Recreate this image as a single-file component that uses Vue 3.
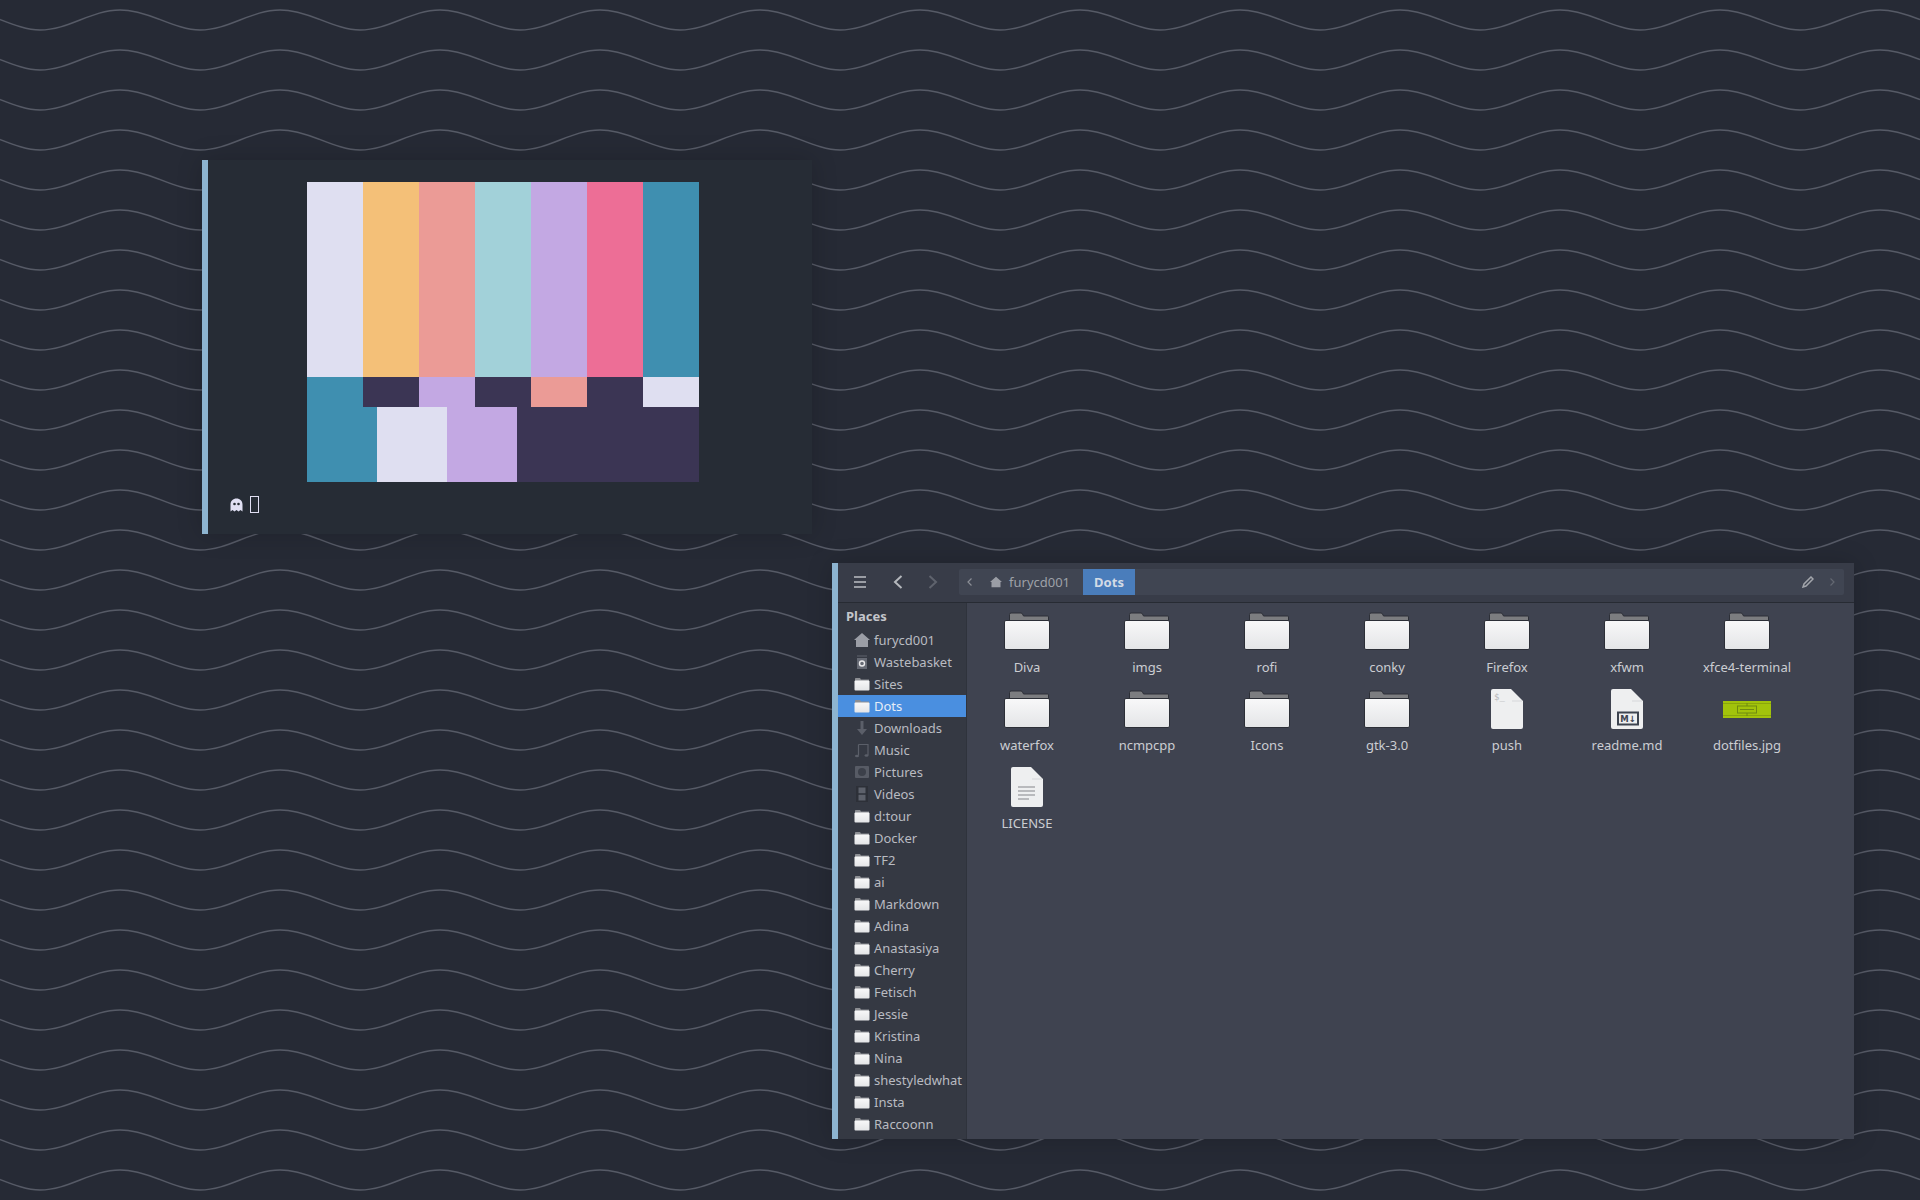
<script setup>
const topBars = ['#dfdff1', '#f4c078', '#eb9b96', '#a2d1d9', '#c3a8e3', '#ed6e96', '#3f8fb0']
const midBars = ['#3f8fb0', '#3b3554', '#c3a8e3', '#3b3554', '#eb9b96', '#3b3554', '#dfdff1']
const lowBars = [
  { color: '#3f8fb0', width: 70 },
  { color: '#dfdff1', width: 70 },
  { color: '#c3a8e3', width: 70 },
  { color: '#3b3554', width: 182 }
]

const places = [
  { name: 'furycd001', icon: 'home' },
  { name: 'Wastebasket', icon: 'trash' },
  { name: 'Sites', icon: 'mini-folder' },
  { name: 'Dots', icon: 'mini-folder', active: true },
  { name: 'Downloads', icon: 'down' },
  { name: 'Music', icon: 'music' },
  { name: 'Pictures', icon: 'camera' },
  { name: 'Videos', icon: 'film' },
  ...['d:tour', 'Docker', 'TF2', 'ai', 'Markdown', 'Adina', 'Anastasiya', 'Cherry', 'Fetisch',
    'Jessie', 'Kristina', 'Nina', 'shestyledwhat', 'Insta', 'Raccoonn'].map((name) => ({ name, icon: 'mini-folder' }))
]

const files = [
  ...['Diva', 'imgs', 'rofi', 'conky', 'Firefox', 'xfwm', 'xfce4-terminal',
    'waterfox', 'ncmpcpp', 'Icons', 'gtk-3.0'].map((name) => ({ name, type: 'folder' })),
  { name: 'push', type: 'script' },
  { name: 'readme.md', type: 'markdown' },
  { name: 'dotfiles.jpg', type: 'image' },
  { name: 'LICENSE', type: 'text' }
]
</script>

<template>
  <div class="desktop">
    <svg class="wallpaper" width="1920" height="1200">
      <defs>
        <pattern id="waves" width="160" height="40" patternUnits="userSpaceOnUse">
          <path d="M0 19.5C13 24.5 27 30 40 30C69 30 91 10 120 10C133 10 147 14.5 160 19.5" fill="none" stroke="#565a66" stroke-width="1.5" />
        </pattern>
        <linearGradient id="paper" x1="0" y1="0" x2="0" y2="1">
          <stop offset="0" stop-color="#f8f8f9" />
          <stop offset="1" stop-color="#e4e5e7" />
        </linearGradient>
        <symbol id="folder" viewBox="0 0 48 48">
          <path d="M6.500 12V8.500Q6.500 7 8 7H18Q19.500 7 20 9L20.500 10H44.500Q45.500 10 45.500 11V15H6.500Z" fill="#7c7d80" stroke="#2c2f37" stroke-width="1" />
          <rect x="1.500" y="14.500" width="45" height="29" rx="1.500" fill="url(#paper)" stroke="#2c2f37" stroke-width="1" />
        </symbol>
        <symbol id="page" viewBox="0 0 32 40">
          <path d="M2 0H20L32 12V38Q32 40 30 40H2Q0 40 0 38V2Q0 0 2 0Z" fill="#eeeff0" />
          <path d="M21 12H31" stroke="#d6d7da" stroke-width="1" />
        </symbol>
        <symbol id="mini-folder" viewBox="0 0 16 16">
          <path d="M1 4V2.800Q1 2 1.800 2H6L7 3.500H15V6H1Z" fill="#8c8e93" />
          <rect x="0.500" y="4.500" width="15" height="10" rx="1" fill="url(#paper)" />
        </symbol>
        <symbol id="home" viewBox="0 0 16 16">
          <path d="M8 1L16 8H14V15H2V8H0Z" fill="#9b9ea6" />
        </symbol>
        <symbol id="trash" viewBox="0 0 16 16">
          <path d="M3 1H13V3H3Z" fill="#4a4e58" />
          <path d="M3 4H13V15H3Z" fill="#666a74" />
          <circle cx="8" cy="9.500" r="2.500" fill="none" stroke="#e8e8ea" stroke-width="1.400" />
        </symbol>
        <symbol id="down" viewBox="0 0 16 16">
          <path d="M6.500 1H9.500V9H13L8 15L3 9H6.500Z" fill="#5b5f69" />
        </symbol>
        <symbol id="music" viewBox="0 0 16 16">
          <path d="M4.500 2.500H14V13M4.500 2.500V13.500" fill="none" stroke="#5b5f69" stroke-width="1.200" />
          <ellipse cx="3" cy="14" rx="2" ry="1.300" fill="#5b5f69" />
          <ellipse cx="12.500" cy="13.500" rx="2" ry="1.300" fill="#5b5f69" />
        </symbol>
        <symbol id="camera" viewBox="0 0 16 16">
          <path d="M1 3Q1 2 2 2H14Q15 2 15 3V13Q15 14 14 14H2Q1 14 1 13Z" fill="#575b65" />
          <circle cx="8" cy="8" r="4" fill="#3c404a" />
        </symbol>
        <symbol id="film" viewBox="0 0 16 16">
          <path d="M2 0H14V16H2Z" fill="#2d3038" />
          <path d="M4.500 1.500H11.500V7.300H4.500ZM4.500 8.700H11.500V14.500H4.500Z" fill="#5d616b" />
        </symbol>
      </defs>
      <rect width="1920" height="1200" fill="url(#waves)" />
    </svg>

    <section class="window bars-window">
      <div class="bars">
        <div class="bar-row tall">
          <span v-for="(color, i) in topBars" :key="i" class="bar" :style="{ background: color }"></span>
        </div>
        <div class="bar-row mid">
          <span v-for="(color, i) in midBars" :key="i" class="bar" :style="{ background: color }"></span>
        </div>
        <div class="bar-row low">
          <span v-for="bar in lowBars" :key="bar.width + bar.color" :style="{ background: bar.color, width: bar.width + 'px' }"></span>
        </div>
      </div>
      <div class="prompt">
        <svg class="ghost" width="13" height="14" viewBox="0 0 13 14">
          <path d="M0.500 13.500V6.500C0.500 3 3 0.500 6.500 0.500C10 0.500 12.500 3 12.500 6.500V13.500L10.500 12L8.500 13.500L6.500 12L4.500 13.500L2.500 12Z" fill="#e0dff3" />
          <circle cx="4.500" cy="6" r="1.300" fill="#262c35" />
          <circle cx="8.500" cy="6" r="1.300" fill="#262c35" />
        </svg>
        <span class="cursor"></span>
      </div>
    </section>

    <section class="window files-window">
      <header class="toolbar">
        <svg class="menu-icon" width="12" height="12" viewBox="0 0 12 12">
          <path d="M0 1H12M0 6H12M0 11H12" stroke="#9a9da4" stroke-width="2" />
        </svg>
        <svg class="nav back" width="10" height="14" viewBox="0 0 10 14">
          <path d="M8.500 1L2 7L8.500 13" fill="none" stroke="#b5b8bd" stroke-width="2" />
        </svg>
        <svg class="nav forward" width="10" height="14" viewBox="0 0 10 14">
          <path d="M1.500 1L8 7L1.500 13" fill="none" stroke="#5f636d" stroke-width="2" />
        </svg>
        <div class="pathbar">
          <svg class="crumb-arrow" width="6" height="8" viewBox="0 0 6 8">
            <path d="M4.500 0.500L1 4L4.500 7.500" fill="none" stroke="#8b8e96" stroke-width="1.200" />
          </svg>
          <svg class="crumb-home" width="12" height="12"><use href="#home" /></svg>
          <span class="crumb">furycd001</span>
          <span class="crumb-active">Dots</span>
          <svg class="pencil" width="12" height="12" viewBox="0 0 12 12">
            <path d="M9 1L11 3L4 10L1 11L2 8Z" fill="none" stroke="#a2a5ab" stroke-width="1.500" />
          </svg>
          <svg class="crumb-next" width="6" height="8" viewBox="0 0 6 8">
            <path d="M1.500 0.500L5 4L1.500 7.500" fill="none" stroke="#646872" stroke-width="1.200" />
          </svg>
        </div>
      </header>
      <div class="body">
        <aside class="sidebar">
          <h3 class="places-title">Places</h3>
          <div v-for="place in places" :key="place.name" class="place" :class="{ active: place.active }">
            <svg class="place-icon" width="16" height="16"><use :href="'#' + place.icon" /></svg>
            <span>{{ place.name }}</span>
          </div>
        </aside>
        <main class="grid">
          <div v-for="file in files" :key="file.name" class="file">
            <div class="file-icon">
              <svg v-if="file.type === 'folder'" width="48" height="48"><use href="#folder" /></svg>
              <svg v-else-if="file.type === 'script'" class="nudged" width="32" height="40" viewBox="0 0 32 40">
                <use href="#page" width="32" height="40" />
                <text x="3" y="11" class="shell">$_</text>
              </svg>
              <svg v-else-if="file.type === 'markdown'" class="nudged" width="32" height="40" viewBox="0 0 32 40">
                <use href="#page" width="32" height="40" />
                <rect x="7" y="23.500" width="20" height="12" fill="none" stroke="#3d4450" stroke-width="2" />
                <text x="17" y="33" class="mark">M↓</text>
              </svg>
              <svg v-else-if="file.type === 'text'" class="nudged" width="32" height="40" viewBox="0 0 32 40">
                <use href="#page" width="32" height="40" />
                <path d="M7 20H24M7 24H24M7 28H24M7 32H18" stroke="#a8a9ac" stroke-width="1.500" />
              </svg>
              <svg v-else class="nudged" width="48" height="17" viewBox="0 0 48 17">
                <rect width="48" height="17" fill="#a2c30b" />
                <path d="M0 2.500H48M0 14.500H48" stroke="#8aa50c" stroke-width="1" />
                <rect x="14.500" y="5" width="19" height="7" fill="none" stroke="#6f8a10" stroke-width="1" />
                <path d="M17 8.500H31M24 2V5M24 12V15" stroke="#6f8a10" stroke-width="1" />
              </svg>
            </div>
            <span class="file-name">{{ file.name }}</span>
          </div>
        </main>
      </div>
    </section>
  </div>
</template>

<style scoped>
.desktop {
  position: relative;
  width: 1920px;
  height: 1200px;
  overflow: hidden;
  background: #262a35;
  font-family: "Noto Sans", "Open Sans", sans-serif;
}
.wallpaper {
  position: absolute;
  left: 0;
  top: 0;
}

.window {
  position: absolute;
  box-sizing: border-box;
  border-left: 6px solid #8db4d0;
  box-shadow: 0 0 24px rgba(0, 0, 0, 0.18);
}

.bars-window {
  left: 202px;
  top: 160px;
  width: 610px;
  height: 374px;
  padding: 22px 0 0 22px;
  background: #262c35;
}
.bars {
  width: 392px;
  margin-left: 77px;
}
.bar-row {
  display: flex;
}
.bar {
  width: 56px;
}
.tall {
  height: 195px;
}
.mid {
  height: 30px;
}
.low {
  height: 75px;
}
.prompt {
  display: flex;
  align-items: center;
  gap: 7px;
  margin-top: 14px;
}
.ghost {
  display: block;
}
.cursor {
  box-sizing: border-box;
  width: 9px;
  height: 17px;
  border: 1px solid #e0dff3;
}

.files-window {
  left: 832px;
  top: 563px;
  width: 1022px;
  height: 576px;
  display: flex;
  flex-direction: column;
  background: #3f4350;
  color: #cbcdd2;
  font-size: 13px;
}
.toolbar {
  display: flex;
  align-items: center;
  height: 40px;
  box-sizing: border-box;
  padding: 0 0 1px 16px;
  background: #383c48;
  border-bottom: 1px solid #272b33;
}
.menu-icon {
  margin-right: 27px;
}
.back {
  margin-right: 25px;
}
.forward {
  margin-right: 21px;
}
.pathbar {
  display: flex;
  align-items: center;
  width: 885px;
  height: 26px;
  background: #404552;
  border-radius: 2px;
  color: #9ea1a8;
}
.crumb-arrow {
  margin-left: 8px;
}
.crumb-home {
  margin-left: 17px;
}
.crumb {
  margin-left: 7px;
  width: 74px;
}
.crumb-active {
  display: flex;
  align-items: center;
  justify-content: center;
  width: 52px;
  height: 26px;
  background: #4a7dbb;
  color: #d3dbe6;
  font-weight: 700;
}
.pencil {
  margin-left: auto;
  margin-right: 15px;
}
.crumb-next {
  margin-right: 9px;
}

.body {
  flex: 1;
  display: flex;
  min-height: 0;
}
.sidebar {
  width: 128px;
  flex-shrink: 0;
  background: #353943;
  border-right: 1px solid #2f333c;
  overflow: hidden;
}
.places-title {
  margin: 0;
  height: 26px;
  padding-left: 8px;
  font-size: 13px;
  font-weight: 700;
  line-height: 27px;
  color: #c4c6cb;
}
.place {
  display: flex;
  align-items: center;
  height: 22px;
  padding-left: 16px;
  gap: 4px;
  white-space: nowrap;
  color: #b9bbc1;
}
.place.active {
  background: #4a8fe0;
  color: #e6edf7;
}
.place-icon {
  flex-shrink: 0;
}

.grid {
  flex: 1;
  display: grid;
  grid-template-columns: repeat(7, 120px);
  grid-auto-rows: 78px;
  align-content: start;
  padding: 3px 0 0 0;
}
.file {
  display: flex;
  flex-direction: column;
  align-items: center;
}
.file-icon {
  display: flex;
  align-items: center;
  justify-content: center;
  width: 48px;
  height: 48px;
  flex-shrink: 0;
}
.file-icon svg {
  display: block;
}
.file-icon .nudged {
  margin-top: 2px;
}
.file-name {
  margin-top: 4px;
  line-height: 18px;
  white-space: nowrap;
}
.shell {
  font-family: "DejaVu Sans Mono", monospace;
  font-size: 9px;
  fill: #b5b6b9;
}
.mark {
  font-family: "DejaVu Sans", sans-serif;
  font-size: 8.500px;
  font-weight: 700;
  text-anchor: middle;
  fill: #3d4450;
}
</style>

<style>
html,
body {
  margin: 0;
  background: #262a35;
}
</style>
